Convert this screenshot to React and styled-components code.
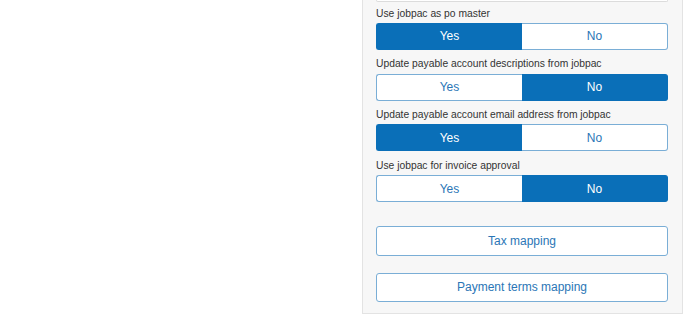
import React from "react";
import styled, { createGlobalStyle } from "styled-components";

const GlobalStyle = createGlobalStyle`
  html, body {
    margin: 0;
    padding: 0;
    background: #ffffff;
  }
  body {
    font-family: "Liberation Sans", Arial, sans-serif;
  }
`;

const settings = [
  { label: "Use jobpac as po master", value: true },
  { label: "Update payable account descriptions from jobpac", value: false },
  { label: "Update payable account email address from jobpac", value: true },
  { label: "Use jobpac for invoice approval", value: false },
];

const mappings = ["Tax mapping", "Payment terms mapping"];

const App = () => {
  return (
    <Page>
      <GlobalStyle />
      <Spacer />
      <Panel>
        <TopBox />
        {settings.map((s, i) => (
          <Group key={s.label} first={i === 0}>
            <Label>{s.label}</Label>
            <Toggle>
              <Segment side="left" active={s.value}>Yes</Segment>
              <Segment side="right" active={!s.value}>No</Segment>
            </Toggle>
          </Group>
        ))}
        <Mappings>
          {mappings.map((m) => (
            <MapButton key={m}>{m}</MapButton>
          ))}
        </Mappings>
      </Panel>
    </Page>
  );
};

export default App;

const Page = styled.div`
  display: grid;
  grid-template-columns: 362px 321px;
  width: 688px;
  height: 315px;
  overflow: hidden;
`

const Spacer = styled.div``

const Panel = styled.div`
  box-sizing: border-box;
  height: 314px;
  background: #f7f7f7;
  border: 1px solid #e3e3e3;
  border-top: none;
  padding: 0 14px 0 13px;
  display: flex;
  flex-direction: column;
`

const TopBox = styled.div`
  height: 1px;
  border: 1px solid #dcdcdc;
  border-top: none;
  border-radius: 0 0 3px 3px;
  background: #fff;
`

const Group = styled.div`
  display: flex;
  flex-direction: column;
  margin-top: ${(p) => (p.first ? "4.6px" : "7.3px")};
`

const Label = styled.div`
  font-size: 10.3px;
  line-height: 13px;
  color: #333333;
  margin-bottom: 3.4px;
  white-space: nowrap;
`

const Toggle = styled.div`
  display: flex;
  height: 27px;
`

const Segment = styled.button`
  flex: 1;
  box-sizing: border-box;
  margin: 0;
  padding: 0;
  font-family: "Liberation Sans", Arial, sans-serif;
  font-size: 12px;
  cursor: pointer;
  background: ${(p) => (p.active ? "#0a6fb8" : "#ffffff")};
  color: ${(p) => (p.active ? "#ffffff" : "#2a76b6")};
  border: 1px solid ${(p) => (p.active ? "#0a6fb8" : "#7aaed6")};
  border-radius: ${(p) => (p.side === "left" ? "3px 0 0 3px" : "0 3px 3px 0")};
  ${(p) => (p.side === "left" ? "border-right: none;" : "border-left: none;")}
`

const Mappings = styled.div`
  display: flex;
  flex-direction: column;
  gap: 17px;
  margin-top: 24px;
`

const MapButton = styled.button`
  box-sizing: border-box;
  height: 29.5px;
  margin: 0;
  padding: 0;
  background: #ffffff;
  border: 1px solid #7aaed6;
  border-radius: 3px;
  font-family: "Liberation Sans", Arial, sans-serif;
  font-size: 12px;
  color: #2a76b6;
  cursor: pointer;
`
